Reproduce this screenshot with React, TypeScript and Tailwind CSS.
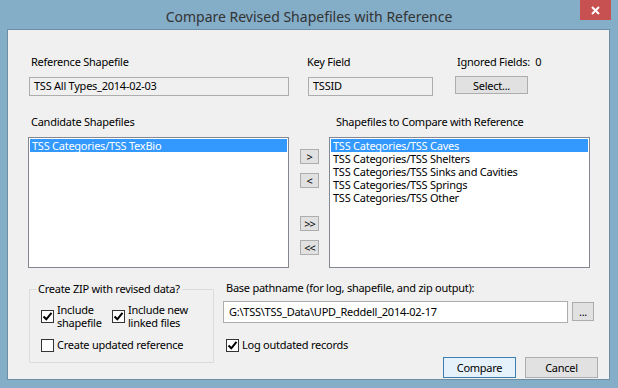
import React from "react"

const font = { fontFamily: '"Noto Sans", "Open Sans", sans-serif' }

const Check = ({ checked }: { checked: boolean }) => (
	<span className="w-[13px] h-[13px] border border-[#333] bg-white flex items-center justify-center shrink-0">
		{checked && (
			<svg width="11" height="11" viewBox="0 0 11 11">
				<path d="M1.5 5.5 L4.3 8.3 L9.5 1.8" stroke="#000" strokeWidth="2" fill="none" />
			</svg>
		)}
	</span>
)

const Btn = ({ label, className }: { label: string; className: string }) => (
	<div
		className={`flex items-center justify-center border bg-[#e1e1e1] text-black leading-none ${className}`}
	>
		{label}
	</div>
)

const ListBox = ({ items, className }: { items: string[]; className: string }) => (
	<div className={`bg-white border border-[#828790] p-px flex flex-col ${className}`}>
		{items.map((it, i) => (
			<div
				key={it}
				className={`h-[13px] leading-[13px] pl-[2px] whitespace-nowrap ${
					i === 0 ? "bg-[#3399ff] text-white" : "text-black"
				}`}
			>
				{it}
			</div>
		))}
	</div>
)

export default function App() {
	return (
		<div
			className="w-[618px] h-[388px] bg-[#84adc8] flex flex-col pl-[7px] pr-[8px] pb-[8px] text-[11px] tracking-[-0.25px] text-black"
			style={font}
		>
			{/* title bar */}
			<div className="h-[29px] flex items-start tracking-normal">
				<div className="flex-1 h-[29px] flex items-center justify-center text-[14px] text-[#333] pl-[31px] pt-[3px]">
					Compare Revised Shapefiles with Reference
				</div>
				<div className="w-[31px] h-[20px] bg-[#c75050] flex items-center justify-center mr-[-1px]">
					<svg width="9" height="9" viewBox="0 0 9 9">
						<path d="M1 1 L8 8 M8 1 L1 8" stroke="#fff" strokeWidth="2" />
					</svg>
				</div>
			</div>

			{/* client */}
			<div className="flex-1 bg-[#f0f0f0] border border-[#6d8fa6] flex flex-col">
				{/* labels row */}
				<div className="flex h-[16px] mt-[24px] pl-[21px] items-center">
					<div className="w-[279px] pl-[2px]">Reference Shapefile</div>
					<div className="w-[147px] -ml-px">Key Field</div>
					<div className="pl-[3px] whitespace-pre">Ignored Fields:  0</div>
				</div>

				{/* textbox row */}
				<div className="flex h-[19px] mt-[7px] pl-[21px] items-start">
					<div className="w-[279px]">
						<div className="w-[260px] h-[19px] border border-[#adadad] flex items-center pl-[4px]">
							TSS All Types_2014-02-03
						</div>
					</div>
					<div className="w-[147px]">
						<div className="w-[125px] h-[19px] border border-[#adadad] flex items-center pl-[4px]">
							TSSID
						</div>
					</div>
					<Btn label="Select..." className="w-[73px] h-[18px] -mt-px border-[#adadad]" />
				</div>

				{/* list labels */}
				<div className="flex h-[16px] mt-[18px] pl-[21px] items-center">
					<div className="w-[307px] pl-[2px]">Candidate Shapefiles</div>
					<div>Shapefiles to Compare with Reference</div>
				</div>

				{/* lists */}
				<div className="flex mt-[7px] pl-[20px] h-[131px]">
					<ListBox items={["TSS Categories/TSS TexBio"]} className="w-[261px] h-[131px]" />
					<div className="w-[40px] flex flex-col items-center pl-px">
						<Btn label=">" className="w-[19px] h-[15px] mt-[12px] border-[#adadad]" />
						<Btn label="<" className="w-[19px] h-[15px] mt-[9px] border-[#adadad]" />
						<Btn label=">>" className="w-[19px] h-[15px] mt-[28px] border-[#adadad] tracking-[-1px]" />
						<Btn label="<<" className="w-[19px] h-[15px] mt-[9px] border-[#adadad] tracking-[-1px]" />
					</div>
					<ListBox
						items={[
							"TSS Categories/TSS Caves",
							"TSS Categories/TSS Shelters",
							"TSS Categories/TSS Sinks and Cavities",
							"TSS Categories/TSS Springs",
							"TSS Categories/TSS Other",
						]}
						className="w-[261px] h-[131px]"
					/>
				</div>

				{/* bottom section */}
				<div className="flex pl-[21px] mt-[13px]">
					<fieldset className="w-[185px] h-[82px] border border-[#dcdcdc] px-[11px] flex flex-col">
						<legend className="px-[2px] -ml-[5px] leading-[16px] whitespace-nowrap">
							Create ZIP with revised data?
						</legend>
						<div className="flex items-center mt-[6px]">
							<Check checked />
							<div className="ml-[3px] leading-[13px] w-[55px]">
								Include
								<br />
								shapefile
							</div>
							<Check checked />
							<div className="ml-[3px] leading-[13px] whitespace-nowrap">
								Include new
								<br />
								linked files
							</div>
						</div>
						<div className="flex items-center mt-[8px]">
							<Check checked={false} />
							<div className="ml-[3px] whitespace-nowrap">Create updated reference</div>
						</div>
					</fieldset>

					<div className="flex-1 ml-[9px] flex flex-col">
						<div className="h-[16px] leading-[16px] mt-[-1px] pl-[3px]">
							Base pathname (for log, shapefile, and zip output):
						</div>
						<div className="flex items-start mt-[5px]">
							<div className="w-[345px] h-[22px] bg-white border border-[#adadad] flex items-center pl-[5px]">
								G:\TSS\TSS_Data\UPD_Reddell_2014-02-17
							</div>
							<Btn label="..." className="w-[22px] h-[19px] ml-[4px] mt-px border-[#adadad]" />
						</div>
						<div className="flex items-center mt-[14px] pl-[3px]">
							<Check checked />
							<div className="ml-[3px]">Log outdated records</div>
						</div>
						<div className="flex justify-end pr-[11px] mt-[3px]">
							<Btn label="Compare" className="w-[73px] h-[21px] border-[#3c7fb1] bg-[#e5f1fb]" />
							<Btn label="Cancel" className="w-[73px] h-[21px] ml-[9px] border-[#adadad]" />
						</div>
					</div>
				</div>
			</div>
		</div>
	)
}
